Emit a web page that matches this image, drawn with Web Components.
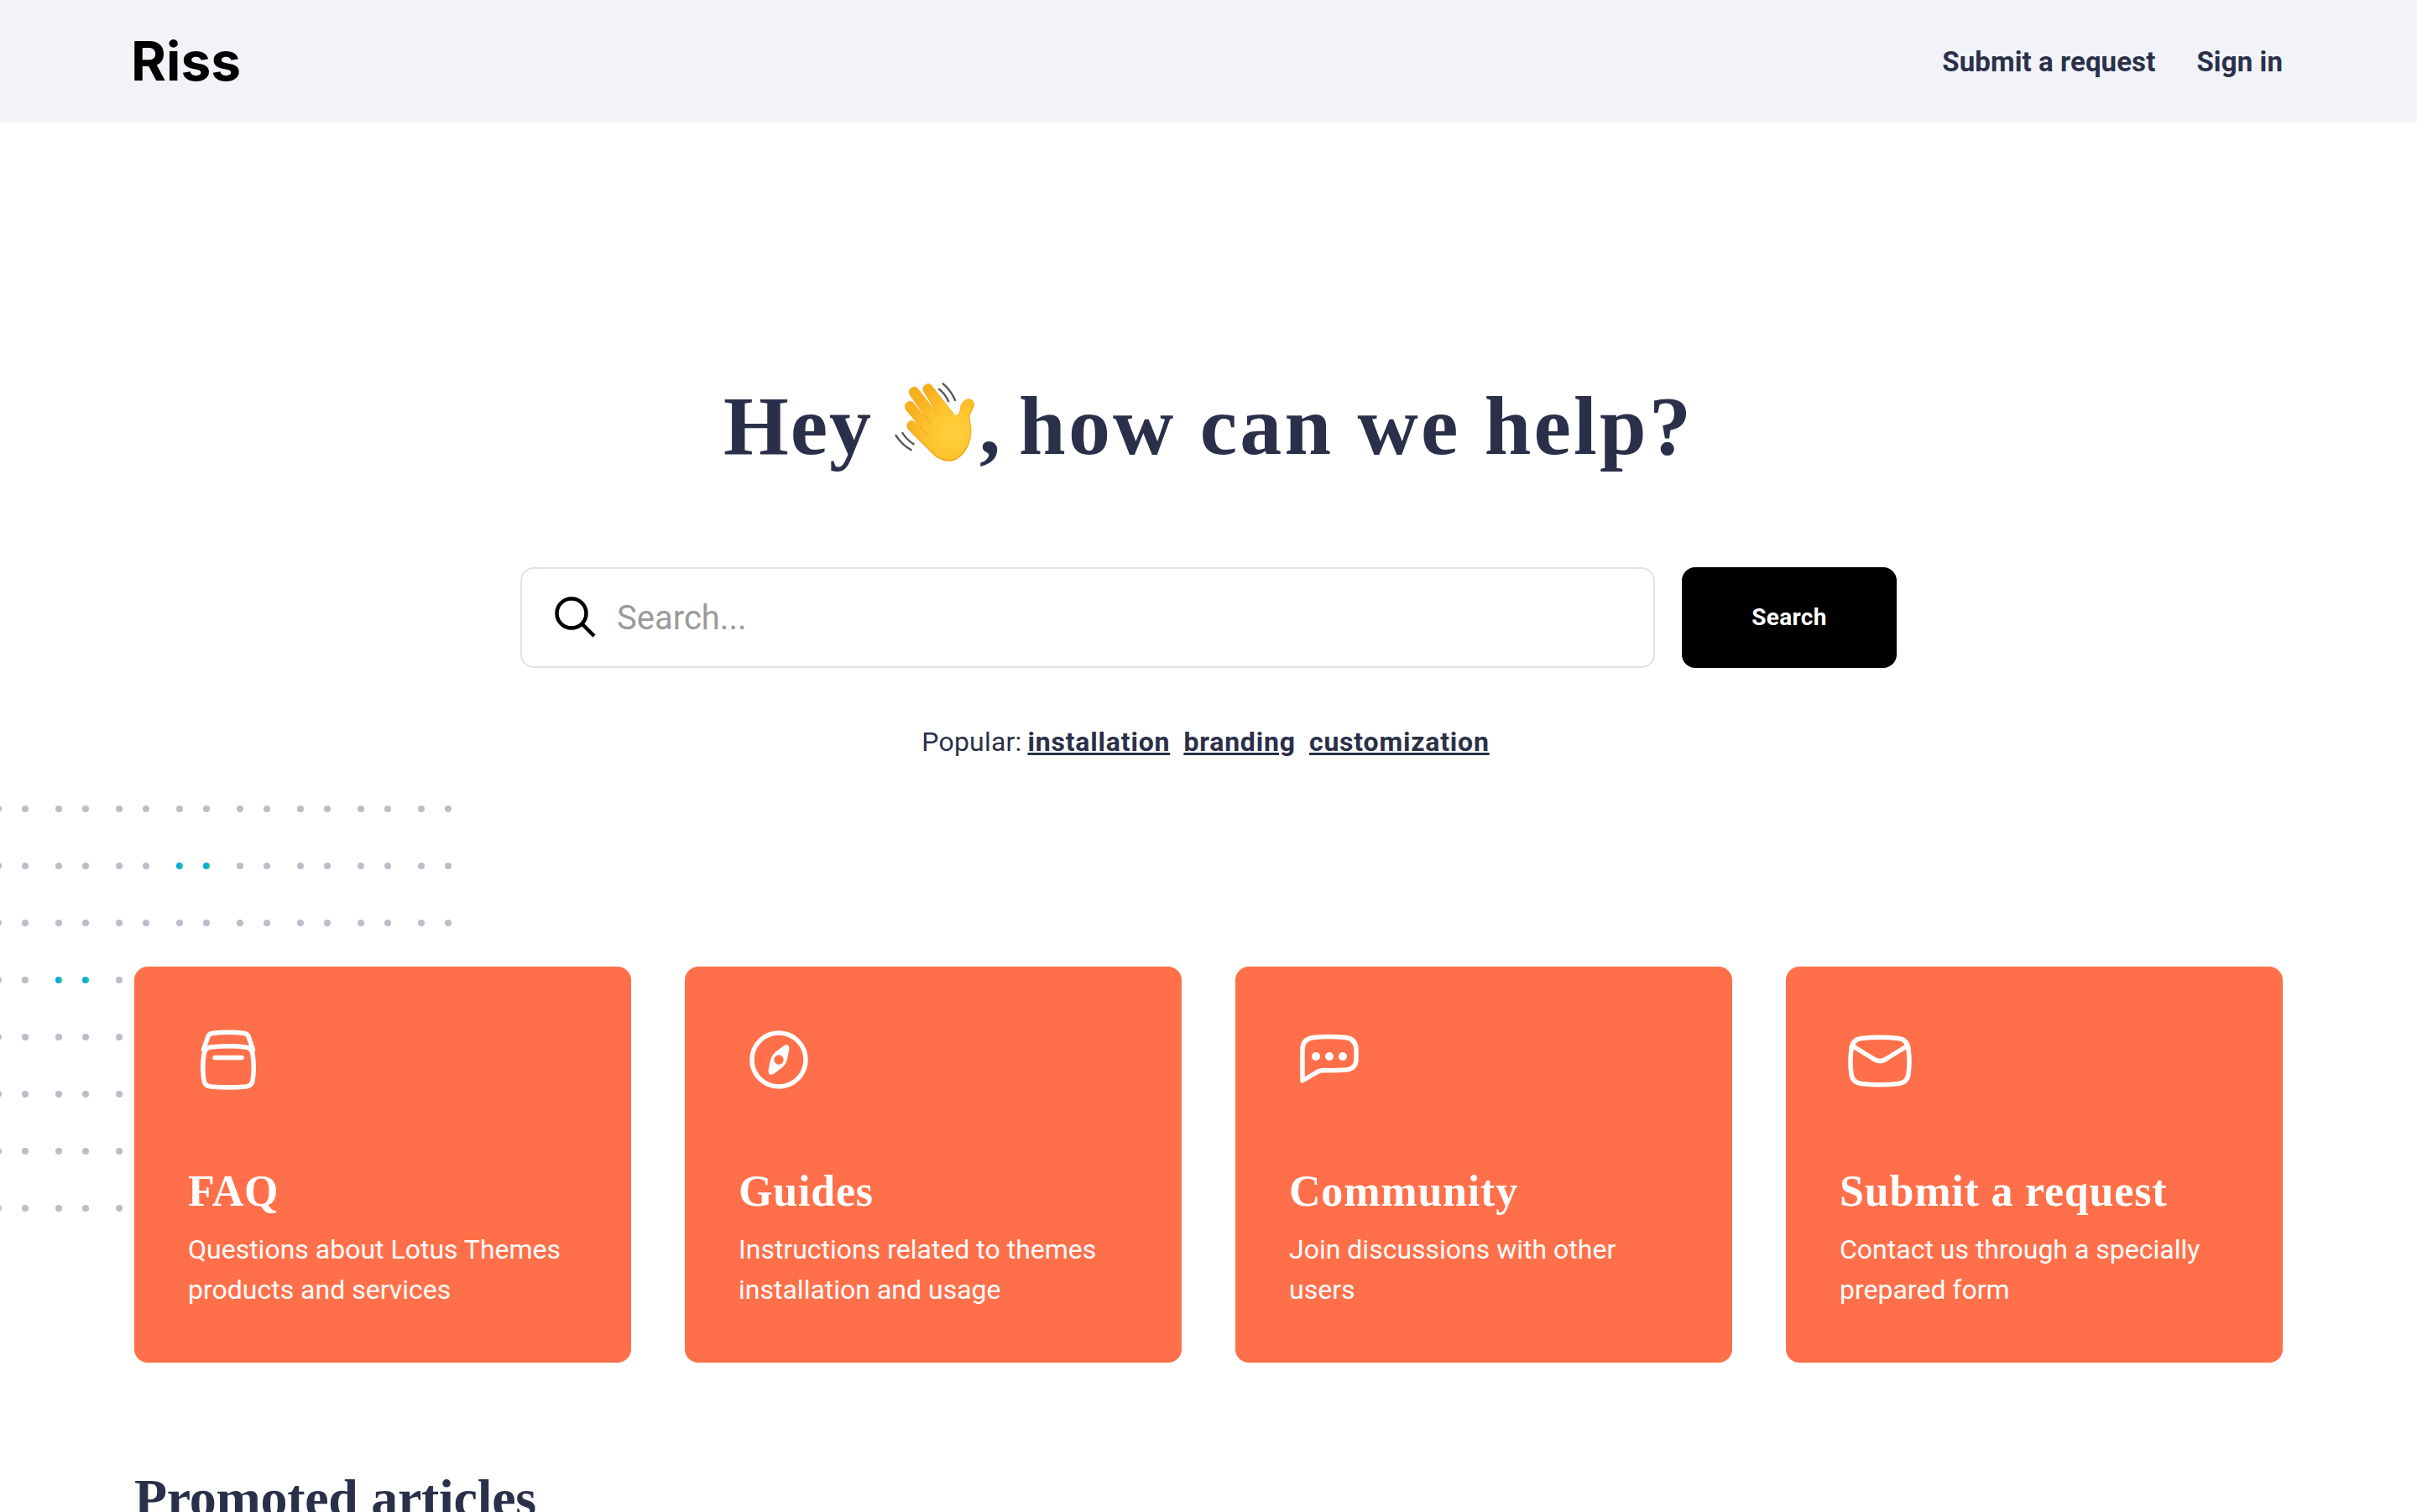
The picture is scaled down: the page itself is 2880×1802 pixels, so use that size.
<!doctype html>
<html>
<head>
<meta charset="utf-8">
<title>Riss</title>
<style>
  html, body { margin: 0; height: 1802px; overflow: hidden; background: #fff; }
  body { font-family: "Roboto", "Liberation Sans", sans-serif; color: #2a3049; }
</style>
</head>
<body>
<riss-page>
  <riss-header slot="header"></riss-header>
  <riss-hero slot="hero"></riss-hero>
  <dot-field slot="dots"></dot-field>
  <topic-card slot="cards" icon="box" heading="FAQ">Questions about Lotus Themes<br>products and services</topic-card>
  <topic-card slot="cards" icon="compass" heading="Guides">Instructions related to themes<br>installation and usage</topic-card>
  <topic-card slot="cards" icon="chat" heading="Community">Join discussions with other<br>users</topic-card>
  <topic-card slot="cards" icon="mail" heading="Submit a request">Contact us through a specially<br>prepared form</topic-card>
  <span slot="promoted">Promoted articles</span>
</riss-page>

<script>
const ICONS = {
  box: `<path d="M18.500 36 L24 20 Q25.500 17 29 16.500 Q48 14 67 16.500 Q70.500 17 72 20 L77.500 36"/>
    <path d="M27 33 Q48 30.500 69 33 Q76 34 77 41 Q79.500 58 77 73 Q76 79 69 80 Q48 82 27 80 Q20 79 19 73 Q16.500 58 19 41 Q20 34 27 33Z"/>
    <path d="M32 45.500 H64"/>`,
  compass: `<circle cx="48" cy="48" r="32"/>
    <path fill="#fff" stroke="none" fill-rule="evenodd" transform="rotate(32 48 48)" d="M44 31 Q48 24 52 31 L56.500 43 Q58 48 56.500 53 L52 65 Q48 72 44 65 L39.500 53 Q38 48 39.500 43 Z M48 42.300 A5.700 5.700 0 1 0 48 53.700 A5.700 5.700 0 1 0 48 42.300Z"/>`,
  chat: `<path d="M16 73 V36 Q16 23 29 21.500 Q48 19.500 67 21.500 Q79 22.500 80 35 V47 Q80 59 68 60 Q52 61 42 60.500 Q36 60.500 32 63.500 Z"/>
    <circle cx="32" cy="44" r="5" fill="#fff" stroke="none"/>
    <circle cx="48" cy="44" r="5" fill="#fff" stroke="none"/>
    <circle cx="64" cy="44" r="5" fill="#fff" stroke="none"/>`,
  mail: `<path d="M26 22.500 Q48 20 70 22.500 Q81 24 82 35 Q84 50 82 65 Q81 75 70 76.500 Q48 79 26 76.500 Q15 75 14 65 Q12 50 14 35 Q15 24 26 22.500Z"/>
    <path d="M16 32 L39 46 Q48 53 57 46 L80 32"/>`
};

const HAND = 'M304 190 L219 81 A18 18 0 0 0 191 103 L246 190 L169 92 A18 18 0 0 0 141 114 L222 226 L154 144 A18 18 0 0 0 126 166 L207 263 L159 213 A17 17 0 0 0 135 237 L220 322 Q250 352 285 350 Q325 345 350 295 Q366 255 358 215 Q352 195 358 178 Q366 165 371 150 Q372 132 352 130 Q332 134 324 155 Q322 190 304 190Z';

class RissPage extends HTMLElement {
  connectedCallback() {
    this.attachShadow({ mode: 'open' });
    this.shadowRoot.innerHTML = `
      <style>
        :host { display: block; position: relative; }
        .cards {
          position: relative;
          display: grid;
          grid-template-columns: repeat(4, 1fr);
          gap: 64px;
          margin: 244px 160px 0;
        }
        h2 {
          margin: 122px 160px 0;
          font: bold 64px/80px "Liberation Serif", serif;
          letter-spacing: -.3px;
          color: #2a3049;
        }
      </style>
      <slot name="header"></slot>
      <slot name="dots"></slot>
      <slot name="hero"></slot>
      <div class="cards"><slot name="cards"></slot></div>
      <h2><slot name="promoted"></slot></h2>
    `;
  }
}

class RissHeader extends HTMLElement {
  connectedCallback() {
    this.attachShadow({ mode: 'open' });
    this.shadowRoot.innerHTML = `
      <style>
        :host {
          display: flex;
          align-items: center;
          justify-content: space-between;
          height: 146px;
          padding: 0 160px 0 156px;
          background: #f1f3f8;
        }
        .logo { font: 700 64px/1 "Inter", sans-serif; color: #000; }
        nav { display: flex; gap: 49px; padding-top: 2px; }
        a { font: 700 33px/48px "Roboto", sans-serif; letter-spacing: .1px; color: #2a3049; text-decoration: none; }
      </style>
      <div class="logo">Riss</div>
      <nav><a href="#">Submit a request</a><a href="#">Sign in</a></nav>
    `;
  }
}

class RissHero extends HTMLElement {
  connectedCallback() {
    this.attachShadow({ mode: 'open' });
    this.shadowRoot.innerHTML = `
      <style>
        :host { display: block; padding-top: 302px; text-align: center; position: relative; }
        h1 {
          margin: 0;
          font: bold 100px/120px "Liberation Serif", serif;
          letter-spacing: 2px;
          color: #2a3049;
        }
        h1 svg { width: 110px; height: 106px; margin: -10px 0 -10px -10px; vertical-align: -4px; }
        h1 .comma { margin-right: -7px; }
        h1 .rest { letter-spacing: 3.2px; }
        .popular { margin-top: 64px; padding-right: 7px; font: 400 32px/48px "Roboto", sans-serif; letter-spacing: .2px; color: #2a3049; }
        .popular a { font-weight: 700; letter-spacing: .8px; color: #2a3049; margin-left: 8px; text-decoration: underline; }
      </style>
      <h1>Hey <svg viewBox="60 50 330 320" aria-hidden="true">
        <defs>
          <radialGradient id="skin" gradientUnits="userSpaceOnUse" cx="300" cy="250" r="170">
            <stop offset="0" stop-color="#ffd23e"/><stop offset=".6" stop-color="#fdc22c"/><stop offset="1" stop-color="#f9b01e"/>
          </radialGradient>
        </defs>
        <g fill="none" stroke="#555" stroke-width="7">
          <path d="M258 73 Q290 100 305 137"/><path d="M244 93 Q268 110 281 141"/>
          <path d="M89 259 Q112 296 148 315"/><path d="M113 250 Q130 278 157 294"/>
        </g>
        <path fill="#ee9a12" transform="translate(1 4)" d="${HAND}"/>
        <path fill="url(#skin)" stroke="#f3a717" stroke-width="2" stroke-linejoin="round" d="${HAND}"/>
      </svg><span class="comma">,</span> <span class="rest">how can we help?</span></h1>
      <search-bar></search-bar>
      <div class="popular">Popular:<a href="#" style="margin-left:7px">installation</a> <a href="#">branding</a> <a href="#">customization</a></div>
    `;
  }
}

class SearchBar extends HTMLElement {
  connectedCallback() {
    this.attachShadow({ mode: 'open' });
    this.shadowRoot.innerHTML = `
      <style>
        :host { display: flex; gap: 32px; width: 1640px; margin: 108px auto 0; height: 120px; text-align: left; }
        .box {
          flex: 1;
          display: flex;
          align-items: center;
          gap: 23px;
          padding-left: 38px;
          border: 2px solid #dfe3e8;
          border-radius: 16px;
          box-sizing: border-box;
        }
        .box svg { width: 52px; height: 52px; flex: none; }
        .placeholder { font: 400 40px/1 "Roboto", sans-serif; color: #9b9b9b; padding-top: 2px; }
        button {
          width: 256px;
          border: 0;
          border-radius: 16px;
          background: #000;
          color: #fff;
          font: 700 28px/1 "Roboto", sans-serif;
          letter-spacing: .3px;
        }
      </style>
      <div class="box">
        <svg viewBox="0 0 52 52" fill="none" stroke="#000" stroke-width="4.500"><circle cx="21" cy="21" r="17.500"/><path d="M33.500 33.500 L48 48"/></svg>
        <span class="placeholder">Search...</span>
      </div>
      <button>Search</button>
    `;
  }
}

class TopicCard extends HTMLElement {
  connectedCallback() {
    const icon = ICONS[this.getAttribute('icon')];
    this.attachShadow({ mode: 'open' });
    this.shadowRoot.innerHTML = `
      <style>
        :host {
          display: block;
          height: 472px;
          box-sizing: border-box;
          padding: 63px 64px 0;
          background: #ff704a;
          border-radius: 16px;
          color: #fff;
        }
        svg { display: block; width: 96px; height: 96px; }
        h3 { margin: 79px 0 0; font: bold 52px/60px "Liberation Serif", serif; letter-spacing: .8px; }
        p { margin: 15px 0 0; font: 400 32px/48px "Roboto", sans-serif; }
      </style>
      <svg viewBox="0 0 96 96" fill="none" stroke="#fff" stroke-width="5.500" stroke-linecap="round" stroke-linejoin="round">${icon}</svg>
      <h3>${this.getAttribute('heading')}</h3>
      <p><slot></slot></p>
    `;
  }
}

// decorative dot pattern behind the cards, pairs of dots repeat every 72px
class DotField extends HTMLElement {
  connectedCallback() {
    const xs = [];
    for (let x = -2; x < 540; x += 72) xs.push(x, x + 32);
    const accents = { '1:214': 1, '1:246': 1, '3:70': 1, '3:102': 1 };
    let dots = '';
    for (let row = 0; row < 8; row++) {
      xs.forEach(x => {
        const fill = accents[row + ':' + x] ? 'url(#accent)' : '#bdbcc9';
        dots += `<circle cx="${x}" cy="${row * 68}" r="4" fill="${fill}"/>`;
      });
    }
    this.attachShadow({ mode: 'open' });
    this.shadowRoot.innerHTML = `
      <style>
        :host { display: block; position: absolute; left: 0; top: 960px; }
        svg { display: block; width: 560px; height: 490px; }
      </style>
      <svg viewBox="0 -4 560 490">
        <defs><linearGradient id="accent"><stop offset=".3" stop-color="#00a6ee"/><stop offset="1" stop-color="#2fce7e"/></linearGradient></defs>
        ${dots}
      </svg>
    `;
  }
}

customElements.define('riss-page', RissPage);
customElements.define('riss-header', RissHeader);
customElements.define('riss-hero', RissHero);
customElements.define('search-bar', SearchBar);
customElements.define('topic-card', TopicCard);
customElements.define('dot-field', DotField);
</script>
</body>
</html>
